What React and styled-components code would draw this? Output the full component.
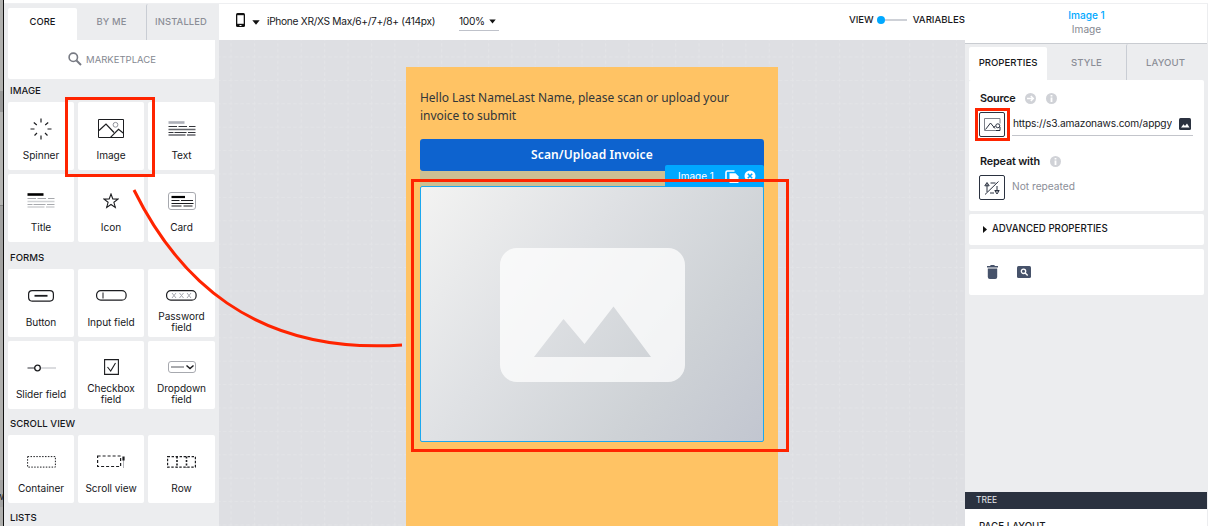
import React from "react";
import styled, { createGlobalStyle } from "styled-components";

const Global = createGlobalStyle`
  *{box-sizing:border-box}
  html,body{margin:0;background:#fff;overflow:hidden}
  body{font-family:Inter,"Liberation Sans",sans-serif;color:#17181c;font-size:10px}
  svg{display:block;flex:none}
`;
const RED = "#ff2400";

const Page = styled.div`position:relative;display:flex;width:1208px;height:526px;overflow:hidden;background:#fff;`;
const Edge = styled.div`
  width:4px;flex:none;border-right:1px solid #111;padding-top:489px;overflow:hidden;
  background:linear-gradient(#b0b0ae 0 91px,#989898 91px 112px,#b4b4b2 112px 205px,#858585 205px 206px,#a2a2a1 206px 300px,#b0b0ae 300px 480px,#a3a3a2 480px 507px,#aeaeac 507px);
`;
const EdgeText = styled.span`display:block;margin-left:-4px;font-size:10px;line-height:14px;`;
const Body = styled.div`display:flex;flex:1;margin-top:3px;border-top:1px solid #eeeff1;`;

const Palette = styled.aside`width:215px;flex:none;background:#ecedef;padding:4px 4px 0;overflow:hidden;height:522px;`;
const PaletteTabs = styled.div`display:flex;height:32px;`;
const PaletteTab = styled.div`
  width:${p => p.$w}px;margin-top:${p => (p.$active ? 0 : -4)}px;padding-top:${p => (p.$active ? 0 : 4)}px;
  display:flex;align-items:center;justify-content:center;line-height:12px;
  padding-bottom:5px;
  background:${p => (p.$active ? "#fff" : "none")};
  color:${p => (p.$active ? "#17181c" : "#8b8e97")};
  border-left:${p => (p.$line ? "1px solid #c9cdd4" : "0")};
  border-radius:2px 2px 0 0;font-size:9.4px;font-weight:500;letter-spacing:${p => p.$ls || 0}px;
`;
const Market = styled.div`
  height:39px;background:#fff;display:flex;align-items:center;justify-content:center;gap:4px;
  color:#858891;font-size:9.5px;letter-spacing:0;border-radius:0 0 2px 2px;padding:0 0 1px 1px;
`;
const Section = styled.h3`
  margin:0;height:${p => p.$h}px;padding:${p => p.$pt}px 0 0 2px;font-size:9.6px;line-height:12px;font-weight:500;letter-spacing:.02px;
`;
const Cards = styled.div`display:grid;grid-template-columns:66px 66px 67px;grid-auto-rows:68px;gap:4px;`;
const Card = styled.div`background:#fff;border-radius:2px;display:flex;flex-direction:column;align-items:center;`;
const CardIcon = styled.div`height:${p => (p.$two ? 42 : 47)}px;padding-top:${p => (p.$two ? 10 : 6)}px;display:flex;align-items:center;`;
const CardLabel = styled.div`font-size:10.1px;line-height:${p => (p.$two ? 10.5 : 12)}px;text-align:center;white-space:pre-line;letter-spacing:-.05px;`;

const Center = styled.main`width:746px;flex:none;display:flex;flex-direction:column;`;
const TopBar = styled.div`height:36px;display:flex;align-items:flex-start;padding:11px 0 0 17px;line-height:13px;font-size:10.2px;`;
const PhoneIcon = styled.svg`margin-top:-2px;`;
const DeviceCaret = styled.span`margin:5px 0 0 7px;`;
const Device = styled.span`margin-left:7px;width:192px;white-space:nowrap;letter-spacing:-.31px;`;
const Zoom = styled.span`display:flex;align-items:center;gap:4px;width:40px;height:16px;padding-bottom:3px;border-bottom:1px solid #bfc2ca;letter-spacing:-.3px;`;
const Modes = styled.div`display:flex;align-items:center;margin-left:auto;margin-top:-2px;font-size:9.6px;font-weight:500;`;
const Switch = styled.div`
  width:30px;margin:0 6px 0 3px;height:8px;display:flex;align-items:center;
  &::before{content:"";width:8px;height:8px;border-radius:50%;background:#00a8ff;}
  &::after{content:"";height:2px;flex:1;background:#ced1d7;}
`;
const Canvas = styled.div`position:relative;flex:1;background:#dedfe3;padding:27px 187px 0;overflow:hidden;`;
const GridLines = styled.svg`position:absolute;inset:0;`;
const Phone = styled.div`position:relative;width:372px;height:459px;background:#ffc364;padding:22px 14px 0;font-family:"Noto Sans","Open Sans",sans-serif;`;
const Hello = styled.p`margin:0;height:50px;font-size:12px;line-height:18px;color:#32363a;letter-spacing:-.03px;white-space:nowrap;`;
const Scan = styled.div`height:32px;background:#0d63cf;border-radius:3px;color:#fff;font-weight:600;font-size:12px;line-height:31px;text-align:center;letter-spacing:.12px;`;
const Gap = styled.div`position:relative;height:15px;background:#cdbf92;`;
const Tag = styled.div`
  position:absolute;right:0;top:-6px;width:99px;height:22px;background:#00a8ff;color:#fff;border-radius:2px 2px 0 0;
  display:flex;align-items:center;gap:5px;padding-left:13px;font:10px Inter,sans-serif;
`;
const TagName = styled.span`width:42px;white-space:nowrap;`;
const Placeholder = styled.div`
  height:256px;border:1px solid #1ca8ef;border-radius:2px;display:flex;align-items:center;justify-content:center;padding-top:1px;
  background:linear-gradient(127deg,#f3f3f2 0%,#dfe1e4 38%,#ced2d6 72%,#c2c6d0 100%);
`;

const Inspector = styled.aside`width:243px;flex:none;background:#ecedef;display:flex;flex-direction:column;height:522px;border-right:1px solid #ecedef;`;
const Head = styled.div`height:40px;background:#fff;border-bottom:1px solid #c9ccd1;text-align:center;padding:4px 0 0 1px;font-size:10.1px;line-height:14px;color:#858891;`;
const HeadName = styled.div`color:#00a8ff;font-weight:500;`;
const PropTabs = styled.div`display:flex;height:36px;padding:0 0 0 4px;`;
const PropTab = styled.div`
  width:${p => p.$w}px;display:flex;align-items:center;justify-content:center;font-size:9.6px;font-weight:500;
  margin-top:${p => (p.$active ? 3 : 0)}px;padding-bottom:${p => (p.$active ? 3 : 0)}px;
  color:${p => (p.$active ? "#17181c" : "#8b8e97")};background:${p => (p.$active ? "#fff" : "none")};
  border-left:${p => (p.$line ? "1px solid #c9cdd4" : "0")};border-radius:2px 2px 0 0;letter-spacing:${p => p.$ls || 0}px;
`;
const Panel = styled.section`width:235px;margin:0 0 ${p => p.$mb}px 4px;height:${p => p.$h}px;background:#fff;border-radius:2px;padding:${p => p.$pad};`;
const FieldLabel = styled.div`display:flex;align-items:center;height:14px;margin-top:${p => p.$mt || 0}px;font-size:10.8px;font-weight:600;gap:10px;letter-spacing:${p => p.$ls}px;padding-left:1px;`;
const Field = styled.div`display:flex;align-items:flex-start;height:26px;margin-top:7px;`;
const Binder = styled.div`width:26px;height:25px;border:1px solid #2b3240;border-radius:2px;display:flex;align-items:center;justify-content:center;flex:none;`;
const UrlInput = styled.div`width:182px;height:24px;margin-left:7px;border-bottom:1px solid #c3c5cb;display:flex;align-items:center;padding-left:1px;`;
const Url = styled.span`width:159px;overflow:hidden;white-space:nowrap;font-size:10.2px;margin:-1px 7px 0 0;letter-spacing:-.16px;`;
const Muted = styled.span`color:#8b8e97;font-size:10.2px;line-height:23px;margin-left:7px;`;
const Advanced = styled.div`display:flex;align-items:center;gap:5px;font-size:9.7px;font-weight:500;line-height:12px;`;
const Actions = styled.div`display:flex;align-items:center;gap:19px;`;
const Tree = styled.div`margin-top:auto;height:17px;background:#2b3240;color:#e5e7eb;font-size:8.5px;line-height:16px;padding-left:11px;`;
const TreeBody = styled.div`height:17px;background:#fff;padding:12px 0 0 14px;font-size:9.7px;line-height:12px;font-weight:500;overflow:hidden;`;

const Mark = styled.div`position:absolute;left:${p => p.$x}px;top:${p => p.$y}px;width:${p => p.$w}px;height:${p => p.$h}px;border:3px solid ${RED};`;
const Arrow = styled.svg`position:absolute;left:0;top:0;`;

const Svg = ({ w, h, children, ...r }) => (
  <svg width={w} height={h} viewBox={`0 0 ${w} ${h}`} fill="none" stroke="#1c1d20" strokeWidth="1" {...r}>{children}</svg>
);
const TextLines = ({ head, body, light }) => (
  <Svg w={28} h={15} stroke={body}>
    <path d="M.5 1.500h16" stroke={head} strokeWidth="2.600" />
    <path d="M.5 5.500h8.500m1.500 0h8.500m2 0h6.500M.5 11.500h5m1 0h12m1.500 0h7.500" stroke={body} strokeWidth="1.200" />
    <path d="M.5 8.500h27M.5 14h17m1.500 0h8.500" stroke={light} strokeWidth="1.300" />
  </Svg>
);
const icons = {
  spinner: <Svg w={22} h={22} strokeWidth="1.200"><path d="M11 .5v4M11 17.500v4M.5 11h4M17.500 11h4M3.800 4.500l3 2.500M18.200 4.500l-3 2.500M4.500 17.500L7 15M17.500 17.500L15 15" /></Svg>,
  image: <Svg w={26} h={19}><path d="M.5.500h25v18H.5z" /><circle cx="17.500" cy="5.800" r="2.400" stroke="#8f929a" /><path d="M1 11.500l7-6.500 8 8.500M12.500 18.300l8-8 5 4" strokeWidth="1.200" /></Svg>,
  text: <TextLines head="#adb0b8" body="#34363b" light="#65676d" />,
  title: <TextLines head="#000" body="#a7a9ad" light="#cfd1d4" />,
  star: <Svg w={16} h={16}><path d="M8 1l1.800 4.900 5.200.2-4.100 3.200 1.400 5.100L8 11.500l-4.300 2.900 1.400-5.100L1 6.100l5.200-.2z" strokeWidth="1.100" /></Svg>,
  card: <Svg w={28} h={18}><rect x=".5" y=".5" width="27" height="17" rx="2.500" stroke="#a7a9af" /><path d="M3.500 5h13.500" stroke="#000" strokeWidth="2.200" /><path d="M3.500 8.500h8m1.500 0h12M3.500 11.500h22M3.500 14h10m2 0h9" /></Svg>,
  button: <Svg w={26} h={12}><rect x=".6" y=".6" width="24.800" height="10.500" rx="3.500" strokeWidth="1.200" /><path d="M6.500 5.800h13" strokeWidth="1.800" /></Svg>,
  input: <Svg w={31} h={11}><rect x=".6" y=".6" width="29.500" height="9.500" rx="4.200" strokeWidth="1.200" /><path d="M7 2.500v6" /></Svg>,
  password: <Svg w={31} h={11}><rect x=".6" y=".6" width="29.500" height="9.500" rx="4.200" strokeWidth="1.200" /><path d="M6 3l4 5m0-5L6 8M13.500 3l4 5m0-5l-4 5M21 3l4 5m0-5l-4 5" stroke="#a6a8b0" /></Svg>,
  slider: <Svg w={29} h={8}><path d="M.5 4H8" stroke="#606268" strokeWidth="1.300" /><path d="M13 4h16" stroke="#b7b9bf" /><circle cx="10.500" cy="4" r="2.800" strokeWidth="1.300" /></Svg>,
  checkbox: <Svg w={15} h={16}><path d="M.6.600h13.800v14.800H.6z" strokeWidth="1.100" /><path d="M3.500 8l3.200 4L11.500 4" strokeWidth="1.100" /></Svg>,
  dropdown: <Svg w={28} h={12}><rect x=".5" y=".5" width="27" height="11" rx="2.500" stroke="#a7a9af" /><path d="M3 6h13" stroke="#55575c" /><path d="M18.500 4.500l3.500 3 3.500-3" strokeWidth="1.500" /></Svg>,
  container: <Svg w={29} h={12}><path d="M.6.600h27.800v10.500H.6z" strokeDasharray="1.500 1.400" /></Svg>,
  scroll: <Svg w={28} h={13}><path d="M.6 1h23v10.500H.6z" strokeDasharray="3 2" strokeWidth="1.200" /><path d="M26.500 2v11" stroke="#b4b6bb" /><path d="M26.500 1.500v4" strokeWidth="2.200" /></Svg>,
  row: <Svg w={29} h={12}><path d="M.6.600h27.800v10.500H.6z" strokeDasharray="2.400 1.600" strokeWidth="1.200" /><path d="M10 .5v11M19.500.5v11" strokeDasharray="2 1.500" strokeWidth="1.600" /></Svg>,
};
const sections = [
  { name: "IMAGE", h: 23, pt: 6, items: [["Spinner", "spinner"], ["Image", "image"], ["Text", "text"], ["Title", "title"], ["Icon", "star"], ["Card", "card"]] },
  { name: "FORMS", h: 27, pt: 10, items: [["Button", "button"], ["Input field", "input"], ["Password\nfield", "password"], ["Slider field", "slider"], ["Checkbox\nfield", "checkbox"], ["Dropdown\nfield", "dropdown"]] },
  { name: "SCROLL VIEW", h: 26, pt: 9, items: [["Container", "container"], ["Scroll view", "scroll"], ["Row", "row"]] },
  { name: "LISTS", h: 26, pt: 9, items: [] },
];
const Info = () => <Svg w={11} h={11} stroke="none"><circle cx="5.500" cy="5.500" r="5.500" fill="#d0d2d7" /><path d="M4.600 2h1.800v1.600H4.600zM4.600 4.500h1.800v4.500H4.600z" fill="#fff" /></Svg>;
const Go = () => <Svg w={11} h={11} stroke="#fff"><circle cx="5.500" cy="5.500" r="5.500" fill="#d0d2d7" stroke="none" /><path d="M2 5.500h6M5.800 3l2.500 2.500L5.800 8" strokeWidth="1.500" /></Svg>;
const Caret = ({ w = 8 }) => <svg width={w} height="5" viewBox="0 0 8 5"><path d="M.3.300h7.400L4 4.700z" fill="#111" /></svg>;

export default function App() {
  return (
    <Page>
      <Global />
      <Edge><EdgeText>w</EdgeText></Edge>
      <Body>
        <Palette>
          <PaletteTabs>
            <PaletteTab $w={69} $active>CORE</PaletteTab>
            <PaletteTab $w={69} $ls={0.15}>BY ME</PaletteTab>
            <PaletteTab $w={69} $line $ls={0.15}>INSTALLED</PaletteTab>
          </PaletteTabs>
          <Market>
            <Svg w={14} h={14} stroke="#777a83" strokeWidth="1.600"><circle cx="5.300" cy="5.300" r="4.200" /><path d="M8.500 8.500L13 13" strokeWidth="2" /></Svg>
            MARKETPLACE
          </Market>
          {sections.map(s => (
            <React.Fragment key={s.name}>
              <Section $h={s.h} $pt={s.pt}>{s.name}</Section>
              <Cards>
                {s.items.map(([label, icon]) => {
                  const two = label.includes("\n");
                  return (
                    <Card key={label}>
                      <CardIcon $two={two}>{icons[icon]}</CardIcon>
                      <CardLabel $two={two}>{label}</CardLabel>
                    </Card>
                  );
                })}
              </Cards>
            </React.Fragment>
          ))}
        </Palette>

        <Center>
          <TopBar>
            <PhoneIcon width="9" height="14" viewBox="0 0 9 14"><rect width="9" height="14" rx="1.500" fill="#111" /><path d="M1.300 2.200h6.400v8.600H1.300z" fill="#fff" /><path d="M3.500 12h2v1h-2z" fill="#fff" /></PhoneIcon>
            <DeviceCaret><Caret /></DeviceCaret>
            <Device>iPhone XR/XS Max/6+/7+/8+ (414px)</Device>
            <Zoom>100% <Caret w={7} /></Zoom>
            <Modes>VIEW<Switch />VARIABLES</Modes>
          </TopBar>
          <Canvas>
            <GridLines width="746" height="486">
              <defs>
                <pattern id="grid" width="23.400" height="23.400" patternUnits="userSpaceOnUse" x="11.500" y="16.500">
                  <path d="M0 .5h23.400M.5 0v23.400" stroke="#e3e4e7" strokeWidth="1" strokeDasharray="3.500 2.350" strokeDashoffset="1.700" />
                </pattern>
              </defs>
              <rect width="746" height="486" fill="url(#grid)" />
            </GridLines>
            <Phone>
              <Hello>Hello Last NameLast Name, please scan or upload your<br />invoice to submit</Hello>
              <Scan>Scan/Upload Invoice</Scan>
              <Gap>
                <Tag>
                  <TagName>Image 1</TagName>
                  <Svg w={14} h={13} stroke="none"><path d="M1 10V2.500a1.500 1.500 0 0 1 1.500-1.500h7" stroke="#fff" strokeWidth="1.600" /><path d="M4.500 3.200h6l3 3V13h-9z" fill="#fff" /></Svg>
                  <Svg w={12} h={12} stroke="#00a8ff"><circle cx="6" cy="6" r="5.500" fill="#fff" stroke="none" /><path d="M3.800 3.800l4.400 4.400m0-4.400L3.800 8.200" strokeWidth="1.600" /></Svg>
                </Tag>
              </Gap>
              <Placeholder>
                <Svg w={185} h={134} stroke="none"><path fillRule="evenodd" fill="#fff" fillOpacity=".74" d="M17 0h151a17 17 0 0 1 17 17v100a17 17 0 0 1-17 17H17a17 17 0 0 1-17-17V17A17 17 0 0 1 17 0zM34 109h117L113.500 58.500 84.500 96 63.500 71z" /></Svg>
              </Placeholder>
            </Phone>
          </Canvas>
        </Center>

        <Inspector>
          <Head><HeadName>Image 1</HeadName>Image</Head>
          <PropTabs>
            <PropTab $w={78} $active>PROPERTIES</PropTab>
            <PropTab $w={79} $ls={0.1}>STYLE</PropTab>
            <PropTab $w={78} $line $ls={0.1}>LAYOUT</PropTab>
          </PropTabs>
          <Panel $h={131} $mb={3} $pad="11px 11px 0 10px">
            <FieldLabel $ls={-0.25}>Source <Go /><Info /></FieldLabel>
            <Field>
              <Binder><Svg w={17} h={13} stroke="#2b3240"><path d="M12 12.500H.5V.500h15.500v5" stroke="#7e828b" /><path d="M1.500 11.500L6.500 5l4.500 5.500M9.500 9.500l2-1.500" /><path d="M12 12.500h4V9" /><circle cx="13.800" cy="7.800" r="2" /></Svg></Binder>
              <UrlInput>
                <Url>https://s3.amazonaws.com/appgyver</Url>
                <Svg w={12} h={12} stroke="none"><rect width="12" height="12" rx="1.500" fill="#2b3240" /><path d="M2 9.500l2.500-3.200L6 8l2-2.500 2.500 4z" fill="#fff" /></Svg>
              </UrlInput>
            </Field>
            <FieldLabel $mt={16} $ls={-0.15}>Repeat with <Info /></FieldLabel>
            <Field>
              <Binder><Svg w={16} h={14} stroke="#2b3240"><path d="M1 13.500L14.500.5M3 11V2.500M.8 4.800L3 1.500l2.200 3.300zM6.500 2h5M6 12h4M13 5v6M10.800 9.500L13 13l2.200-3.500z" /></Svg></Binder>
              <Muted>Not repeated</Muted>
            </Field>
          </Panel>
          <Panel $h={31} $mb={4} $pad="9px 0 0 14px">
            <Advanced><svg width="4" height="7" viewBox="0 0 4 7"><path d="M0 0l4 3.500L0 7z" fill="#111" /></svg>ADVANCED PROPERTIES</Advanced>
          </Panel>
          <Panel $h={46} $mb={0} $pad="16px 0 0 18px">
            <Actions>
              <svg width="11" height="14" viewBox="0 0 11 14"><path d="M0 1h3l.8-1h3.400L8 1h3v1.500H0zM.8 3.500h9.400V12a2 2 0 0 1-2 2H2.800a2 2 0 0 1-2-2z" fill="#46526a" /></svg>
              <svg width="14" height="12" viewBox="0 0 14 12"><rect width="14" height="12" rx="1.500" fill="#46526a" /><circle cx="6.500" cy="5.300" r="2.200" fill="none" stroke="#fff" strokeWidth="1.300" /><path d="M8.200 7l2.500 2.500" stroke="#fff" strokeWidth="1.400" /></svg>
            </Actions>
          </Panel>
          <Tree>TREE</Tree>
          <TreeBody>PAGE LAYOUT</TreeBody>
        </Inspector>
      </Body>

      <Mark $x={65} $y={97} $w={90} $h={80} />
      <Mark $x={411} $y={179} $w={378} $h={273} />
      <Mark $x={975} $y={108} $w={35} $h={33} />
      <Arrow width="410" height="360"><path d="M134 190C176 275 251 355 402 345" fill="none" stroke={RED} strokeWidth="3" /></Arrow>
    </Page>
  );
}
